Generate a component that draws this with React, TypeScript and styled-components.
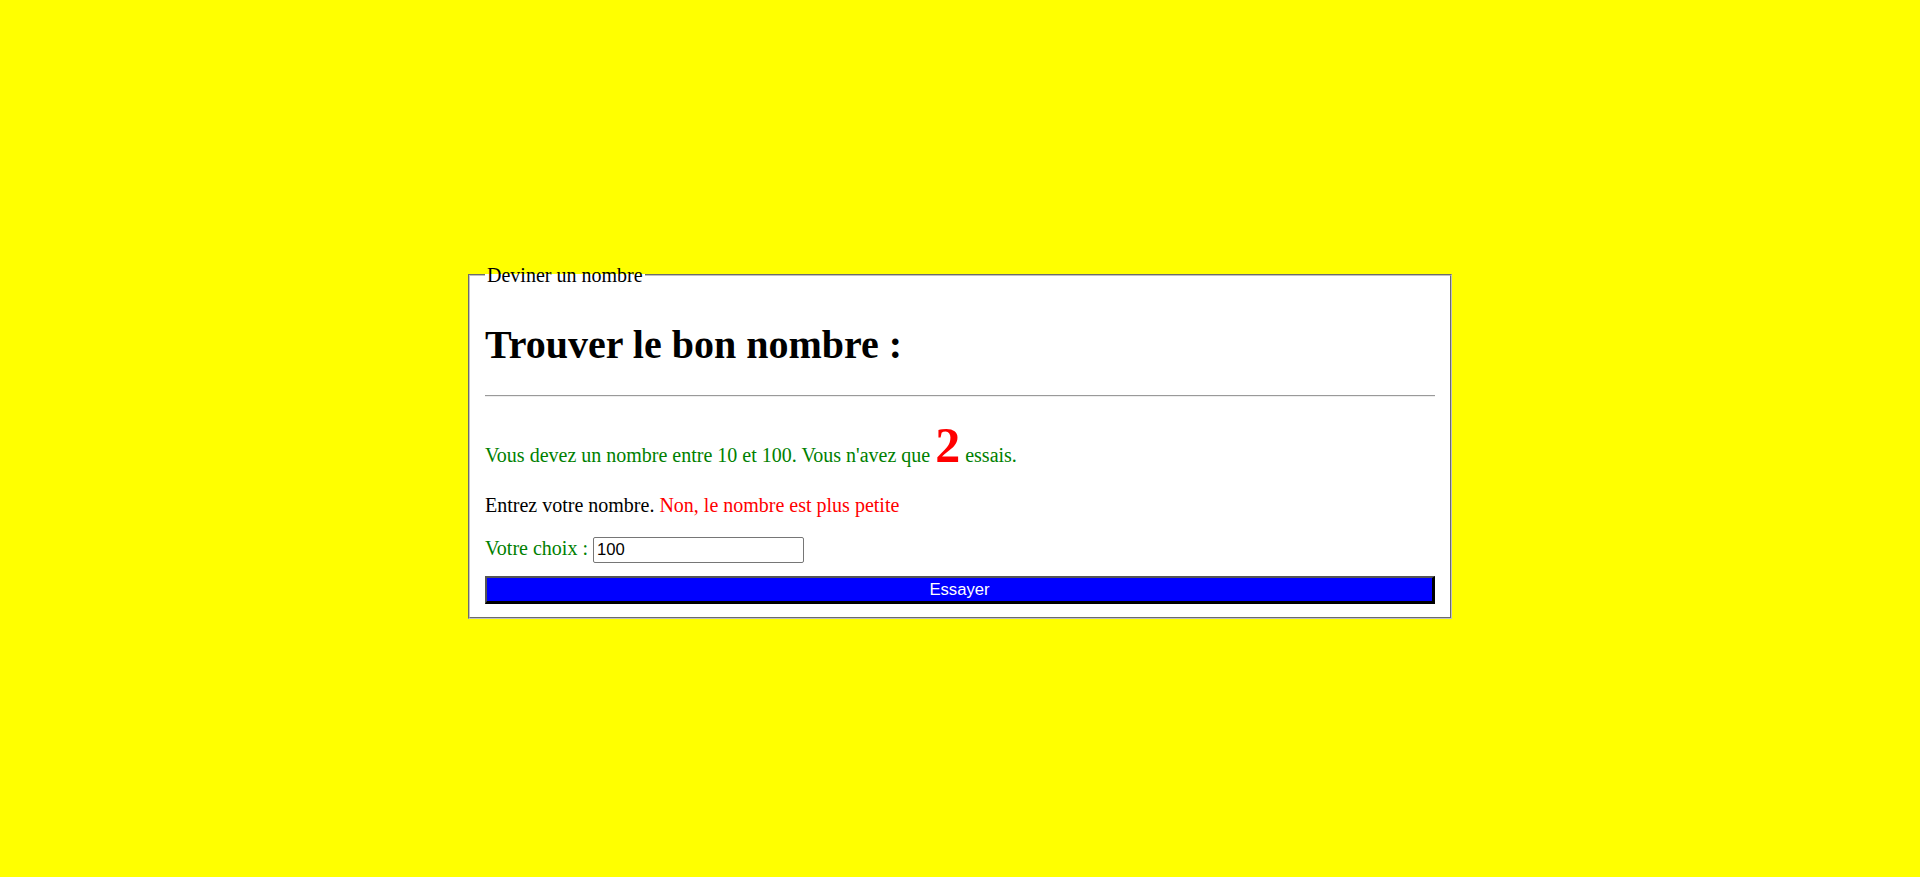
import React from "react";
import styled, { createGlobalStyle } from "styled-components";

const GlobalStyle = createGlobalStyle`
  html, body {
    margin: 0;
    padding: 0;
    background: #ffff00;
  }
  body {
    font-family: "Liberation Serif", "Times New Roman", serif;
    font-size: 20px;
  }
`;

const Page = styled.div`
  min-height: 100vh;
  display: flex;
  align-items: center;
  justify-content: center;
  box-sizing: border-box;
  padding-top: 3px;
`;

const Box = styled.fieldset`
  width: 950px;
  margin: 0;
  padding: 7px 15px 13px;
  border: 2px groove #c0c0c0;
  background: #ffffff;
  font-family: "Liberation Serif", "Times New Roman", serif;
  font-size: 20px;
  line-height: 23px;
`;

const Legend = styled.legend`
  padding: 2px 2px 0;
  color: #000;
  font-size: 20px;
  line-height: 25px;
`;

const Title = styled.h1`
  margin: 27px 0;
  font-size: 40px;
  line-height: 46px;
  font-weight: bold;
  color: #000;
`;

const Rule = styled.hr`
  margin: 0;
  border: 0;
  border-top: 1px solid #9a9a9a;
  border-bottom: 1px solid #eeeeee;
`;

const Line = styled.p<{ $tone?: string; $top?: number }>`
  margin: ${(p) => p.$top ?? 20}px 0 0;
  color: ${(p) => p.$tone ?? "#000"};
  font-size: 20px;
  line-height: 23px;
`;

const Big = styled.span`
  color: #ff0000;
  font-weight: bold;
  font-size: 50px;
  line-height: 57px;
`;

const Alert = styled.span`
  color: #ff0000;
`;

const Choice = styled.label`
  color: #008000;
`;

const Field = styled.input`
  box-sizing: border-box;
  width: 211px;
  height: 26px;
  padding: 0 3px;
  border: 1px solid #767676;
  border-radius: 2px;
  font-family: "Liberation Sans", Arial, sans-serif;
  font-size: 16.67px;
  color: #000;
  background: #fff;
  vertical-align: baseline;
  outline: none;
`;

const Submit = styled.button`
  display: block;
  box-sizing: border-box;
  width: 100%;
  height: 28px;
  margin-top: 13px;
  padding: 0;
  background: #0000ff;
  color: #ffffff;
  font-family: "Liberation Sans", Arial, sans-serif;
  font-size: 16.67px;
  line-height: 22px;
  border-style: solid;
  border-width: 2px 3px 3px 2px;
  border-color: #555555 #000000 #000000 #555555;
  cursor: pointer;
`;

export default function App() {
  return (
    <>
      <GlobalStyle />
      <Page>
        <Box>
          <Legend>Deviner un nombre</Legend>
          <Title>Trouver le bon nombre :</Title>
          <Rule />
          <Line $tone="#008000">
            Vous devez un nombre entre 10 et 100. Vous n'avez que <Big>2</Big> essais.
          </Line>
          <Line>
            Entrez votre nombre. <Alert>Non, le nombre est plus petite</Alert>
          </Line>
          <Line $top={20}>
            <Choice htmlFor="choix">Votre choix : </Choice>
            <Field id="choix" type="text" defaultValue="100" />
          </Line>
          <Submit type="button">Essayer</Submit>
        </Box>
      </Page>
    </>
  );
}
